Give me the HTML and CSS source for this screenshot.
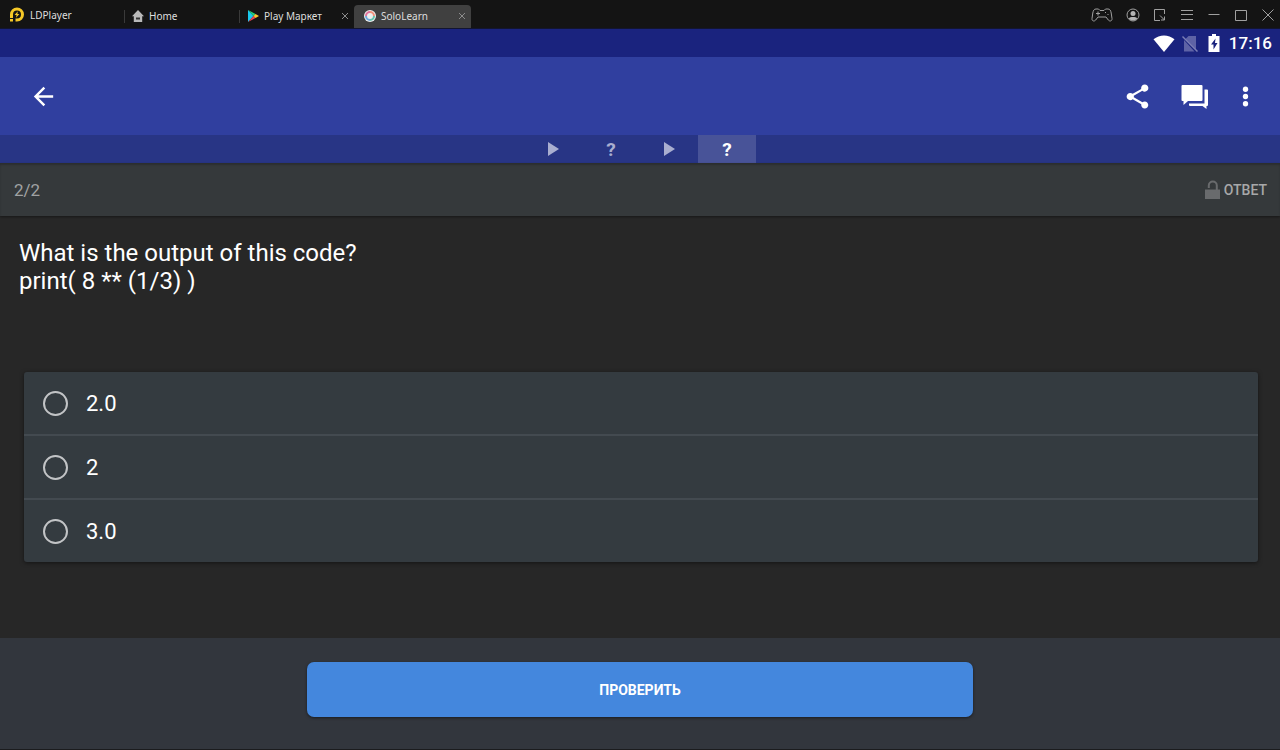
FILE: index.html
```html
<!DOCTYPE html>
<html lang="ru">
<head>
  <meta charset="UTF-8">
  <meta name="viewport" content="width=device-width, initial-scale=1.0">
  <title>SoloLearn</title>
  <link rel="stylesheet" href="styles.css">
</head>
<body>
  <!-- Emulator window bar -->
  <header class="titlebar">
    <div class="brand">
      <svg class="brand-logo" viewBox="0 0 16 16">
        <path d="M1 11V7.500a7 7 0 1 1 7 7H6.500V11.500H8a4 4 0 1 0-4-4V11z" fill="#f5c827"/>
        <path d="M1 12h3v2.500H1z" fill="#f5c827"/>
        <path d="M8.800 4.200 5.600 8h2l-.6 2.800L10.400 7h-2z" fill="#f5c827"/>
      </svg>
      <span>LDPlayer</span>
    </div>
    <nav class="window-tabs">
      <div class="window-tab">
        <button class="tab-open">
          <svg class="tab-icon" viewBox="0 0 12 12">
            <path d="M6 0 12 6.200h-1.800V12H1.800V6.200H0z" fill="#b9b9b9"/>
            <path d="M4 7.500h4v2H4z" fill="#333"/>
          </svg>
          Home
        </button>
      </div>
      <div class="window-tab">
        <button class="tab-open">
          <svg class="tab-icon" viewBox="0 0 12 12">
            <path d="M1 0 6.500 6 1 12z" fill="#19c8ee"/>
            <path d="M1 0 8.500 4 6.500 6z" fill="#25d07c"/>
            <path d="M1 12 8.500 8 6.500 6z" fill="#ee4354"/>
            <path d="M8.500 4 12 6 8.500 8l-2-2z" fill="#fcc62d"/>
          </svg>
          Play Маркет
        </button>
        <button class="tab-close" aria-label="Закрыть Play Маркет">
          <svg viewBox="0 0 8 8"><path d="M1 1l6 6M7 1 1 7"/></svg>
        </button>
      </div>
      <div class="window-tab active">
        <button class="tab-open">
          <svg class="tab-icon" viewBox="0 0 12 12">
            <circle cx="6" cy="6" r="6" fill="#eee"/>
            <g fill="none" stroke-width="2">
              <path d="M6 2a4 4 0 0 1 4 4" stroke="#f0907c"/>
              <path d="M10 6a4 4 0 0 1-4 4" stroke="#63c3ae"/>
              <path d="M6 10a4 4 0 0 1-4-4" stroke="#6fa9dc"/>
              <path d="M2 6a4 4 0 0 1 4-4" stroke="#e2719a"/>
            </g>
          </svg>
          SoloLearn
        </button>
        <button class="tab-close" aria-label="Закрыть SoloLearn">
          <svg viewBox="0 0 8 8"><path d="M1 1l6 6M7 1 1 7"/></svg>
        </button>
      </div>
    </nav>
    <div class="window-controls">
      <button class="window-control wide" aria-label="Геймпад">
        <svg viewBox="0 0 22 14">
          <path d="M5 1h2.500l1.500 1.500h4L14.500 1H17c2 0 2.700 1.500 3.200 4l.8 5.500c.3 2.500-2.200 3.300-3.700 1.500L15 9H7l-2.300 3C3.200 13.800.7 13 1 10.500L1.800 5C2.300 2.500 3 1 5 1z"/>
          <path d="M5 5.500h4M7 3.500v4M14 4.500h1M16.500 6.500h1"/>
        </svg>
      </button>
      <button class="window-control" aria-label="Аккаунт">
        <svg viewBox="0 0 14 14">
          <circle cx="7" cy="7" r="6"/>
          <circle cx="7" cy="5.500" r="2.500" fill="#b5b5b5" stroke="none"/>
          <path d="M2.800 10.500C4 8.600 10 8.600 11.200 10.500 9.500 13 4.500 13 2.800 10.500z" fill="#b5b5b5" stroke="none"/>
        </svg>
      </button>
      <button class="window-control" aria-label="Мини-режим">
        <svg viewBox="0 0 14 14">
          <path d="M11.500 6V1.500h-10v11H7M7 7.500l4.500 4.500M11.500 8.500V12H8"/>
        </svg>
      </button>
      <button class="window-control" aria-label="Меню">
        <svg viewBox="0 0 14 14"><path d="M1 2.500h12M1 6.500h12M1 11.500h12"/></svg>
      </button>
      <button class="window-control" aria-label="Свернуть">
        <svg viewBox="0 0 14 14"><path d="M1.500 6.500h11"/></svg>
      </button>
      <button class="window-control" aria-label="Развернуть">
        <svg viewBox="0 0 14 14"><path d="M1.500 2.500h11v10h-11z"/></svg>
      </button>
      <button class="window-control" aria-label="Закрыть">
        <svg viewBox="0 0 14 14"><path d="M1.500 1.500l11 11M12.500 1.500l-11 11"/></svg>
      </button>
    </div>
  </header>

  <!-- Android status bar -->
  <div class="status-bar">
    <svg class="status-wifi" viewBox="0 0 22 17">
      <path d="M11 17 .5 4.200C6.500-.9 15.500-.9 21.500 4.200z" fill="#fff"/>
    </svg>
    <svg class="status-sim" viewBox="0 0 16 17">
      <path d="M6.500 1H14v13.500L3.500 4zM2 5 12.500 16.500H2z" fill="#5e63a5"/>
      <path d="M.5 1.500l15 15" stroke="#7b7fb5" stroke-width="1.500"/>
    </svg>
    <svg class="status-battery" viewBox="0 0 12 18">
      <path d="M4 0h4v2h3.500v16H.5V2H4z" fill="#fff"/>
      <path d="M7.500 4.500 3 10.500h2.500v5l4-6.500H7z" fill="#1a237e"/>
    </svg>
    <span class="status-time">17:16</span>
  </div>

  <div class="toolbar">
    <button class="icon-button" aria-label="Назад">
      <svg viewBox="0 0 24 24"><path d="M20 11H7.830l5.590-5.590L12 4l-8 8 8 8 1.410-1.410L7.830 13H20v-2z"/></svg>
    </button>
    <div class="toolbar-actions">
      <button class="icon-button" aria-label="Поделиться">
        <svg viewBox="0 0 24 24"><path d="M18 16.080c-.76 0-1.440.3-1.960.77L8.910 12.700c.05-.23.09-.46.09-.7s-.04-.47-.09-.7l7.050-4.110c.54.5 1.250.81 2.040.81 1.660 0 3-1.340 3-3s-1.340-3-3-3-3 1.340-3 3c0 .24.04.47.09.7L8.040 9.810C7.500 9.310 6.790 9 6 9c-1.660 0-3 1.340-3 3s1.340 3 3 3c.79 0 1.500-.31 2.040-.81l7.120 4.160c-.05.21-.08.43-.08.65 0 1.610 1.310 2.920 2.920 2.920s2.920-1.310 2.920-2.920-1.310-2.920-2.920-2.920z"/></svg>
      </button>
      <button class="icon-button" aria-label="Комментарии">
        <svg viewBox="0 0 29 29">
          <path d="M2.500 3h19q1 0 1 1v14q0 1-1 1H8l-4.500 4V19h-1q-1 0-1-1V4q0-1 1-1z"/>
          <path d="M24.500 7.500H27q1 0 1 1V23q0 1-1 1h-.5v3L22.500 24H10q-1 0-1-1v-1.500h15.500z"/>
        </svg>
      </button>
      <button class="icon-button" aria-label="Ещё">
        <svg viewBox="0 0 24 24">
          <circle cx="12" cy="6" r="2.200"/>
          <circle cx="12" cy="12" r="2.200"/>
          <circle cx="12" cy="18" r="2.200"/>
        </svg>
      </button>
    </div>
  </div>

  <nav class="lesson-tabs">
    <button class="lesson-tab" aria-label="Урок 1"><svg viewBox="0 0 11 14"><path d="M0 0l11 7-11 7z"/></svg></button>
    <button class="lesson-tab">?</button>
    <button class="lesson-tab" aria-label="Урок 2"><svg viewBox="0 0 11 14"><path d="M0 0l11 7-11 7z"/></svg></button>
    <button class="lesson-tab active">?</button>
  </nav>

  <div class="progress-bar">
    <span class="progress-count">2/2</span>
    <button class="answer-button">
      <svg viewBox="0 0 15 19">
        <path d="M0 9.500h15V19H0z" fill="#696b6d"/>
        <path d="M3.800 8V5.500a4 4 0 0 1 8 0V10" fill="none" stroke="#696b6d" stroke-width="2"/>
      </svg>
      ОТВЕТ
    </button>
  </div>

  <form class="quiz">
    <main class="quiz-body">
      <p class="question" id="question">What is the output of this code?<br>print( 8 ** (1/3) )</p>
      <div class="options" role="radiogroup" aria-labelledby="question">
        <label class="option"><input type="radio" name="answer" value="2.0">2.0</label>
        <label class="option"><input type="radio" name="answer" value="2">2</label>
        <label class="option"><input type="radio" name="answer" value="3.0">3.0</label>
      </div>
    </main>
    <footer class="quiz-footer">
      <button class="check-button" type="button">ПРОВЕРИТЬ</button>
    </footer>
  </form>
</body>
</html>
```
FILE: styles.css
```css
* {
  margin: 0;
  padding: 0;
  box-sizing: border-box;
}

body {
  min-height: 100vh;
  display: flex;
  flex-direction: column;
  background-color: #272727;
  color: #fff;
  font-family: Roboto, "Liberation Sans", sans-serif;
}

button {
  border: none;
  background: none;
  color: inherit;
  font: inherit;
  cursor: pointer;
}

svg {
  display: block;
}

/* Emulator window bar */
.titlebar {
  height: 29px;
  display: flex;
  align-items: flex-end;
  background-color: #141414;
  border-bottom: 1px solid #121531;
  color: #dedede;
  font-family: "Noto Sans", "Open Sans", sans-serif;
  font-size: 10px;
}

.brand {
  width: 124px;
  height: 26px;
  padding-left: 9px;
  display: flex;
  align-items: center;
  gap: 5px;
}

.brand-logo {
  width: 16px;
  height: 16px;
}

.window-tabs {
  display: flex;
}

.window-tab {
  width: 115px;
  height: 23px;
  padding: 0 5px 0 8px;
  display: flex;
  justify-content: space-between;
  background: linear-gradient(#3a3a3a, #3a3a3a) 0 5px / 1px 13px no-repeat;
}

.window-tab.active {
  width: 117px;
  padding-left: 10px;
  background: #404040;
  border-radius: 4px 4px 0 0;
}

.tab-open,
.tab-close {
  height: 22px;
  display: flex;
  align-items: center;
  gap: 5px;
}

.tab-icon {
  width: 12px;
  height: 12px;
}

.tab-close svg {
  width: 8px;
  height: 8px;
  stroke: #8c8c8c;
}

.window-controls {
  height: 26px;
  margin-left: auto;
  padding-right: 5px;
  display: flex;
  align-items: center;
  gap: 13px;
}

.window-control svg {
  width: 14px;
  height: 14px;
  fill: none;
  stroke: #a0a0a0;
}

.window-control.wide svg {
  width: 22px;
}

/* Android status bar */
.status-bar {
  height: 28px;
  padding-right: 8px;
  display: flex;
  align-items: center;
  justify-content: flex-end;
  background-color: #1a237e;
}

.status-wifi {
  width: 22px;
  height: 17px;
  margin-right: 7px;
}

.status-sim {
  width: 16px;
  height: 17px;
  margin-right: 10px;
}

.status-battery {
  width: 12px;
  height: 18px;
  margin-right: 9px;
}

.status-time {
  font-size: 17px;
  font-weight: 500;
}

/* App bar */
.toolbar {
  height: 78px;
  padding: 0 20px 0 29px;
  display: flex;
  align-items: center;
  justify-content: space-between;
  background-color: #303f9f;
}

.toolbar-actions {
  display: flex;
  gap: 28px;
}

.toolbar-actions .icon-button:last-child {
  margin-left: -6px;
}

.icon-button svg {
  width: 29px;
  height: 29px;
  fill: #fff;
}

.lesson-tabs {
  height: 28px;
  display: flex;
  justify-content: center;
  background-color: #283585;
}

.lesson-tab {
  width: 58px;
  display: flex;
  align-items: center;
  justify-content: center;
  color: #a9aed0;
  font-size: 19px;
  font-weight: 700;
}

.lesson-tab svg {
  width: 11px;
  height: 14px;
  fill: #a9aed0;
}

.lesson-tab.active {
  background-color: #485398;
  color: #fff;
}

.progress-bar {
  height: 53px;
  padding: 0 13px 0 14px;
  display: flex;
  align-items: center;
  justify-content: space-between;
  background-color: #35393b;
  box-shadow: inset 0 2px 2px rgba(0, 0, 0, 0.2), 0 1px 2px rgba(0, 0, 0, 0.4);
}

.progress-count {
  color: #a0a2a3;
  font-size: 17px;
}

.answer-button {
  display: flex;
  align-items: center;
  gap: 4px;
  color: #a7a8a9;
  font-size: 14px;
  font-weight: 500;
}

.answer-button svg {
  width: 15px;
  height: 19px;
}

/* Quiz */
.quiz {
  flex: 1;
  display: flex;
  flex-direction: column;
}

.quiz-body {
  flex: 1;
  padding: 23px 22px 24px 19px;
}

.question {
  font-size: 24px;
  line-height: 28px;
}

.options {
  margin: 77px 0 0 5px;
  background-color: #343b40;
  border-radius: 3px;
  box-shadow: 0 1px 4px rgba(0, 0, 0, 0.5);
}

.option {
  height: 64px;
  padding-left: 19px;
  display: flex;
  align-items: center;
  gap: 18px;
  border-bottom: 2px solid #434a50;
  font-size: 22px;
  cursor: pointer;
}

.option:last-child {
  height: 62px;
  border-bottom: none;
}

.option input {
  width: 25px;
  height: 25px;
  appearance: none;
  border: 2px solid #c2c4c6;
  border-radius: 50%;
}

.option input:checked {
  background: radial-gradient(circle, #4487dd 6px, transparent 7px);
}

.quiz-footer {
  height: 112px;
  padding-top: 24px;
  background-color: #32363d;
  border-bottom: 1px solid #1b1c1e;
  text-align: center;
}

.check-button {
  width: 52%;
  height: 55px;
  background-color: #4487dd;
  border-radius: 7px;
  box-shadow: 0 1px 3px rgba(0, 0, 0, 0.5);
  font-size: 14px;
  font-weight: 700;
}
```
